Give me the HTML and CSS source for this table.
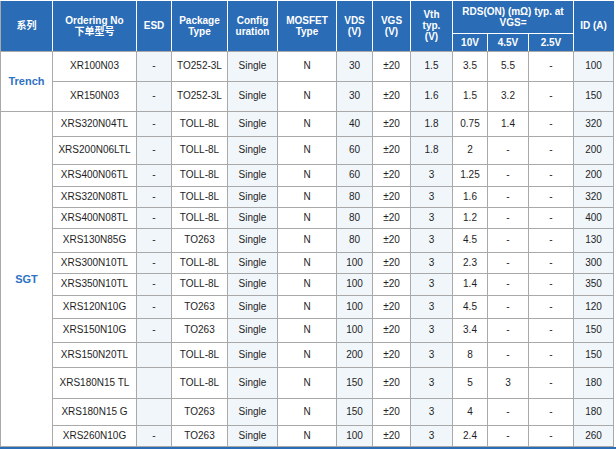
FILE: index.html
```html
<!DOCTYPE html>
<html lang="zh">
<head>
<meta charset="utf-8">
<link rel="stylesheet" href="styles.css">
</head>
<body>
<table class="spec">
  <colgroup>
    <col class="c-series"><col class="c-order"><col class="c-esd tint"><col class="c-pkg"><col class="c-cfg tint"><col class="c-type"><col class="c-vds tint"><col class="c-vgs"><col class="c-vth tint"><col class="c-r10"><col class="c-r45"><col class="c-r25"><col class="c-id tint">
  </colgroup>
  <thead>
    <tr class="h1">
      <th rowspan="2">系列</th>
      <th rowspan="2">Ordering No<br>下单型号</th>
      <th rowspan="2">ESD</th>
      <th rowspan="2">Package<br>Type</th>
      <th rowspan="2">Config<br>uration</th>
      <th rowspan="2">MOSFET<br>Type</th>
      <th rowspan="2">VDS<br>(V)</th>
      <th rowspan="2">VGS<br>(V)</th>
      <th rowspan="2">Vth<br>typ.<br>(V)</th>
      <th colspan="3">RDS(ON) (mΩ) typ. at<br>VGS=</th>
      <th rowspan="2">ID (A)</th>
    </tr>
    <tr class="h2">
      <th>10V</th><th>4.5V</th><th>2.5V</th>
    </tr>
  </thead>
  <tbody>
    <tr class="r30"><td rowspan="2" class="series">Trench</td><td>XR100N03</td><td>-</td><td>TO252-3L</td><td>Single</td><td>N</td><td>30</td><td>±20</td><td>1.5</td><td>3.5</td><td>5.5</td><td>-</td><td>100</td></tr>
    <tr class="r30"><td>XR150N03</td><td>-</td><td>TO252-3L</td><td>Single</td><td>N</td><td>30</td><td>±20</td><td>1.6</td><td>1.5</td><td>3.2</td><td>-</td><td>150</td></tr>
    <tr class="r25"><td rowspan="14" class="series">SGT</td><td>XRS320N04TL</td><td>-</td><td>TOLL-8L</td><td>Single</td><td>N</td><td>40</td><td>±20</td><td>1.8</td><td>0.75</td><td>1.4</td><td>-</td><td>320</td></tr>
    <tr class="r28"><td>XRS200N06LTL</td><td>-</td><td>TOLL-8L</td><td>Single</td><td>N</td><td>60</td><td>±20</td><td>1.8</td><td>2</td><td>-</td><td>-</td><td>200</td></tr>
    <tr class="r22"><td>XRS400N06TL</td><td>-</td><td>TOLL-8L</td><td>Single</td><td>N</td><td>60</td><td>±20</td><td>3</td><td>1.25</td><td>-</td><td>-</td><td>200</td></tr>
    <tr class="r21"><td>XRS320N08TL</td><td>-</td><td>TOLL-8L</td><td>Single</td><td>N</td><td>80</td><td>±20</td><td>3</td><td>1.6</td><td>-</td><td>-</td><td>320</td></tr>
    <tr class="r21"><td>XRS400N08TL</td><td>-</td><td>TOLL-8L</td><td>Single</td><td>N</td><td>80</td><td>±20</td><td>3</td><td>1.2</td><td>-</td><td>-</td><td>400</td></tr>
    <tr class="r24"><td>XRS130N85G</td><td>-</td><td>TO263</td><td>Single</td><td>N</td><td>80</td><td>±20</td><td>3</td><td>4.5</td><td>-</td><td>-</td><td>130</td></tr>
    <tr class="r21"><td>XRS300N10TL</td><td>-</td><td>TOLL-8L</td><td>Single</td><td>N</td><td>100</td><td>±20</td><td>3</td><td>2.3</td><td>-</td><td>-</td><td>300</td></tr>
    <tr class="r22"><td>XRS350N10TL</td><td>-</td><td>TOLL-8L</td><td>Single</td><td>N</td><td>100</td><td>±20</td><td>3</td><td>1.4</td><td>-</td><td>-</td><td>350</td></tr>
    <tr class="r23"><td>XRS120N10G</td><td>-</td><td>TO263</td><td>Single</td><td>N</td><td>100</td><td>±20</td><td>3</td><td>4.5</td><td>-</td><td>-</td><td>120</td></tr>
    <tr class="r24"><td>XRS150N10G</td><td>-</td><td>TO263</td><td>Single</td><td>N</td><td>100</td><td>±20</td><td>3</td><td>3.4</td><td>-</td><td>-</td><td>150</td></tr>
    <tr class="r25"><td>XRS150N20TL</td><td></td><td>TOLL-8L</td><td>Single</td><td>N</td><td>200</td><td>±20</td><td>3</td><td>8</td><td>-</td><td>-</td><td>150</td></tr>
    <tr class="r31"><td>XRS180N15 TL</td><td></td><td>TOLL-8L</td><td>Single</td><td>N</td><td>150</td><td>±20</td><td>3</td><td>5</td><td>3</td><td>-</td><td>180</td></tr>
    <tr class="r27"><td>XRS180N15 G</td><td></td><td>TO263</td><td>Single</td><td>N</td><td>150</td><td>±20</td><td>3</td><td>4</td><td>-</td><td>-</td><td>180</td></tr>
    <tr class="r21"><td>XRS260N10G</td><td>-</td><td>TO263</td><td>Single</td><td>N</td><td>100</td><td>±20</td><td>3</td><td>2.4</td><td>-</td><td>-</td><td>260</td></tr>
  </tbody>
</table>
<div class="next-bar"></div>
</body>
</html>
```

FILE: styles.css
```css
html, body {
  margin: 0;
  padding: 0;
  background: #ffffff;
}

body {
  font-family: "Liberation Sans", Arial, "Noto Sans CJK SC", sans-serif;
  color: #1e1e1e;
}

.spec {
  border-collapse: collapse;
  table-layout: fixed;
  width: 613px;
  font-size: 10px;
  margin-top: 1px;
}

.c-series { width: 52px; }
.c-order { width: 84px; }
.c-esd { width: 35px; }
.c-pkg { width: 56px; }
.c-cfg { width: 50px; }
.c-type { width: 59px; }
.c-vds { width: 36px; }
.c-vgs { width: 38px; }
.c-vth { width: 42px; }
.c-r10 { width: 35px; }
.c-r45 { width: 41px; }
.c-r25 { width: 45px; }
.c-id { width: 40px; }

.tint { background: #f1f6fb; }

.spec th {
  background: #2a6cb6;
  color: #ffffff;
  font-weight: bold;
  font-size: 10px;
  line-height: 11px;
  border: 1px solid #ffffff;
  border-top: none;
  border-bottom: 1px solid #a9a9a9;
  padding: 0;
  text-align: center;
  vertical-align: middle;
}

.spec thead tr.h1 th[colspan] {
  border-bottom: 1px solid #ffffff;
}

.spec thead th:first-child {
  border-left: 1px solid #a9a9a9;
}

.spec thead th:last-child {
  border-right: 1px solid #2a6cb6;
}

.h1 { height: 32px; }
.h2 { height: 18px; }

.spec td {
  border: 1px solid #a9a9a9;
  padding: 0;
  text-align: center;
  vertical-align: middle;
  line-height: 12px;
  white-space: nowrap;
}

.spec td.series {
  color: #2f72c4;
  font-weight: bold;
  font-size: 11px;
  background: #ffffff;
}

.r21 { height: 21px; }
.r22 { height: 22px; }
.r23 { height: 23px; }
.r24 { height: 24px; }
.r25 { height: 25px; }
.r27 { height: 27px; }
.r28 { height: 28px; }
.r30 { height: 30px; }
.r31 { height: 31px; }

.next-bar {
  height: 4px;
  background: #2a6cb6;
  width: 616px;
}
```
